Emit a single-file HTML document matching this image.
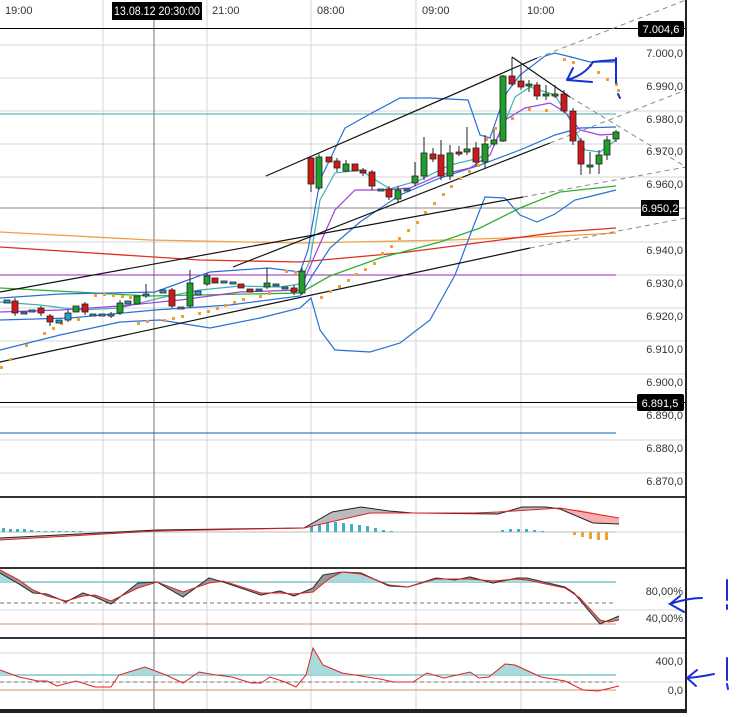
<!DOCTYPE html>
<html><head><meta charset="utf-8"><style>
html,body{margin:0;padding:0;background:#fff;}
svg{display:block;font-family:"Liberation Sans",sans-serif;}
.ax{font-size:11px;fill:#333;}
</style></head><body>
<svg width="740" height="717" viewBox="0 0 740 717" xmlns="http://www.w3.org/2000/svg">
<defs>
<clipPath id="c1" clipPathUnits="userSpaceOnUse"><rect x="0" y="569" width="620" height="13"/></clipPath>
<clipPath id="c2" clipPathUnits="userSpaceOnUse"><rect x="0" y="640" width="620" height="35"/></clipPath>
</defs>
<rect x="0" y="0" width="686" height="717" fill="#fff"/>
<g stroke="#d6d6d6" stroke-width="1">
<line x1="103" y1="0" x2="103" y2="710"/><line x1="207" y1="0" x2="207" y2="710"/>
<line x1="311" y1="0" x2="311" y2="710"/><line x1="416" y1="0" x2="416" y2="710"/>
<line x1="521" y1="0" x2="521" y2="710"/>
<line x1="0" y1="45" x2="686" y2="45"/><line x1="0" y1="78" x2="686" y2="78"/>
<line x1="0" y1="111" x2="686" y2="111"/><line x1="0" y1="144" x2="686" y2="144"/>
<line x1="0" y1="177" x2="686" y2="177"/><line x1="0" y1="242" x2="686" y2="242"/>
<line x1="0" y1="275" x2="686" y2="275"/><line x1="0" y1="308" x2="686" y2="308"/>
<line x1="0" y1="341" x2="686" y2="341"/><line x1="0" y1="374" x2="686" y2="374"/>
<line x1="0" y1="407" x2="686" y2="407"/><line x1="0" y1="440" x2="686" y2="440"/>
<line x1="0" y1="473" x2="686" y2="473"/>
<line x1="0" y1="532" x2="686" y2="532"/><line x1="0" y1="610" x2="686" y2="610"/>
<line x1="0" y1="653" x2="686" y2="653"/><line x1="0" y1="682" x2="686" y2="682"/>
</g>
<line x1="154" y1="20" x2="154" y2="712" stroke="#777" stroke-width="1"/>
<text x="5" y="14" class="ax">19:00</text>
<text x="212" y="14" class="ax">21:00</text>
<text x="317" y="14" class="ax">08:00</text>
<text x="422" y="14" class="ax">09:00</text>
<text x="527" y="14" class="ax">10:00</text>
<rect x="112" y="2" width="90" height="18" fill="#000"/>
<text x="114" y="15" font-size="11.5" fill="#fff" textLength="86" lengthAdjust="spacingAndGlyphs">13.08.12 20:30:00</text>
<line x1="0" y1="28.5" x2="686" y2="28.5" stroke="#000"/>
<line x1="0" y1="114" x2="616" y2="114" stroke="#3aa9a0"/>
<line x1="0" y1="208" x2="686" y2="208" stroke="#888"/>
<line x1="0" y1="275" x2="616" y2="275" stroke="#a020c0"/>
<line x1="0" y1="402.5" x2="686" y2="402.5" stroke="#000"/>
<line x1="0" y1="433" x2="616" y2="433" stroke="#1060b0"/>
<polyline fill="none" stroke="#f0a040" stroke-width="1.3" points="0,232 150,240 300,243 450,240 560,236 616,233"/>
<polyline fill="none" stroke="#e03020" stroke-width="1.3" points="0,247 200,260 300,262 400,253 500,240 560,232 616,228"/>
<polyline fill="none" stroke="#30b030" stroke-width="1.3" points="0,288 150,296 300,293 330,276 380,258 440,242 480,228 520,208 560,192 616,186"/>
<polyline fill="none" stroke="#2a6fd6" stroke-width="1.2" points="0,298 60,294 155,292 210,272 268,268 300,272 308,250 320,180 345,128 370,114 400,98 430,98 468,100 480,135 490,138 505,95 520,75 545,56 555,53 575,58 590,62 616,62"/>
<polyline fill="none" stroke="#2a6fd6" stroke-width="1.2" points="0,320 70,318 155,310 230,305 300,296 312,276 330,248 360,222 400,195 440,178 480,165 520,150 555,135 580,128 616,127"/>
<polyline fill="none" stroke="#2a6fd6" stroke-width="1.2" points="0,350 60,335 120,322 160,320 210,328 260,318 300,308 311,298 320,330 335,350 370,352 400,343 430,320 455,275 472,230 485,197 505,198 520,215 537,222 555,214 575,200 600,194 616,190"/>
<polyline fill="none" stroke="#40b0b0" stroke-width="1.2" points="0,302 40,305 80,310 120,308 160,298 200,290 240,286 280,287 300,284 310,260 320,200 335,173 360,170 390,189 420,180 450,165 480,158 500,135 515,97 530,87 555,95 570,120 585,150 600,152 616,140"/>
<polyline fill="none" stroke="#a040e0" stroke-width="1.2" points="0,312 60,310 120,306 180,300 240,292 300,290 315,255 335,210 355,190 380,190 410,188 440,175 470,168 490,155 505,120 525,108 550,103 565,112 580,130 600,135 616,134"/>
<g stroke="#111" stroke-width="1.2">
<line x1="266" y1="176" x2="537" y2="58"/>
<line x1="233" y1="267" x2="550" y2="143"/>
<line x1="0" y1="292" x2="523" y2="197"/>
<line x1="0" y1="362" x2="530" y2="248"/>
<line x1="512" y1="57" x2="570" y2="97"/>
</g>
<g stroke="#888" stroke-width="1" stroke-dasharray="5,4">
<line x1="537" y1="58" x2="686" y2="0"/>
<line x1="550" y1="143" x2="686" y2="90"/>
<line x1="523" y1="197" x2="686" y2="167"/>
<line x1="530" y1="248" x2="686" y2="218"/>
<line x1="570" y1="97" x2="686" y2="167"/>
</g>
<g fill="#f0a030">
<rect x="0" y="366" width="3" height="3"/><rect x="9" y="358" width="3" height="3"/><rect x="25" y="344" width="3" height="3"/><rect x="43" y="332" width="3" height="3"/><rect x="52" y="327" width="3" height="3"/><rect x="60" y="322" width="3" height="3"/><rect x="77" y="318" width="3" height="3"/><rect x="94" y="294" width="3" height="3"/><rect x="103" y="293" width="3" height="3"/><rect x="112" y="294" width="3" height="3"/><rect x="121" y="295" width="3" height="3"/><rect x="129" y="296" width="3" height="3"/>
<rect x="137" y="322" width="3" height="3"/><rect x="146" y="320" width="3" height="3"/><rect x="163" y="319" width="3" height="3"/><rect x="172" y="317" width="3" height="3"/><rect x="181" y="315" width="3" height="3"/><rect x="198" y="312" width="3" height="3"/><rect x="207" y="310" width="3" height="3"/><rect x="216" y="307" width="3" height="3"/><rect x="224" y="304" width="3" height="3"/><rect x="233" y="301" width="3" height="3"/><rect x="242" y="298" width="3" height="3"/><rect x="259" y="295" width="3" height="3"/><rect x="268" y="292" width="3" height="3"/><rect x="285" y="270" width="3" height="3"/><rect x="294" y="271" width="3" height="3"/>
<rect x="320" y="296" width="3" height="3"/><rect x="329" y="290" width="3" height="3"/><rect x="338" y="285" width="3" height="3"/><rect x="347" y="279" width="3" height="3"/><rect x="355" y="273" width="3" height="3"/><rect x="364" y="268" width="3" height="3"/><rect x="373" y="262" width="3" height="3"/><rect x="381" y="252" width="3" height="3"/><rect x="390" y="245" width="3" height="3"/><rect x="398" y="237" width="3" height="3"/><rect x="407" y="229" width="3" height="3"/><rect x="416" y="221" width="3" height="3"/><rect x="424" y="211" width="3" height="3"/><rect x="433" y="202" width="3" height="3"/><rect x="442" y="193" width="3" height="3"/><rect x="450" y="185" width="3" height="3"/><rect x="459" y="177" width="3" height="3"/><rect x="468" y="170" width="3" height="3"/><rect x="477" y="164" width="3" height="3"/><rect x="485" y="138" width="3" height="3"/><rect x="494" y="127" width="3" height="3"/><rect x="511" y="117" width="3" height="3"/><rect x="528" y="108" width="3" height="3"/><rect x="545" y="109" width="3" height="3"/>
<rect x="563" y="58" width="3" height="3"/><rect x="572" y="61" width="3" height="3"/><rect x="589" y="64" width="3" height="3"/><rect x="597" y="71" width="3" height="3"/><rect x="606" y="78" width="3" height="3"/><rect x="615" y="83" width="3" height="3"/><rect x="617" y="89" width="3" height="3"/>
</g>
<g stroke="#222" stroke-width="1">
<path d="M15 298V316M41 306V316M50 314V326M68 310V322M85 302V315M111 312V318M120 300V315M146 284V298M172 288V308M190 270V308M207 273V286M267 268V289M294 285V295M302 268V295M311 156V192M319 154V190M337 158V172M346 160V172M363 168V176M372 170V190M389 186V200M398 186V202M415 162V186M424 137V180M433 148V162M441 140V180M450 145V180M459 146V156M467 127V155M476 142V166M485 135V168M494 130V146M503 75V142M512 57V86M521 66V90M529 80V92M537 82V100M546 85V100M555 85V98M564 90V113M573 108V145M581 138V175M590 152V174M599 150V174M607 136V160M616 130V142"/>
</g>
<g stroke="#222" stroke-width="0.8">
<rect x="4" y="300" width="6" height="3" fill="#2a9bd0"/>
<rect x="12" y="301" width="6" height="12" fill="#d01818"/>
<rect x="21" y="312" width="6" height="2" fill="#2a9bd0"/>
<rect x="29" y="310" width="6" height="2" fill="#2a9bd0"/>
<rect x="38" y="308" width="6" height="5" fill="#d01818"/>
<rect x="47" y="316" width="6" height="6" fill="#d01818"/>
<rect x="56" y="320" width="6" height="3" fill="#2a9bd0"/>
<rect x="65" y="313" width="6" height="7" fill="#2a9bd0"/>
<rect x="73" y="306" width="6" height="6" fill="#1e9e2a"/>
<rect x="82" y="304" width="6" height="8" fill="#d01818"/>
<rect x="90" y="314" width="6" height="2" fill="#2a9bd0"/>
<rect x="99" y="314" width="6" height="2" fill="#2a9bd0"/>
<rect x="108" y="314" width="6" height="2" fill="#2a9bd0"/>
<rect x="117" y="303" width="6" height="10" fill="#1e9e2a"/>
<rect x="125" y="301" width="6" height="3" fill="#2a9bd0"/>
<rect x="134" y="296" width="6" height="8" fill="#1e9e2a"/>
<rect x="143" y="294" width="6" height="2" fill="#2a9bd0"/>
<rect x="160" y="290" width="6" height="3" fill="#2a9bd0"/>
<rect x="169" y="290" width="6" height="16" fill="#d01818"/>
<rect x="178" y="307" width="6" height="2" fill="#2a9bd0"/>
<rect x="187" y="283" width="6" height="23" fill="#1e9e2a"/>
<rect x="195" y="291" width="6" height="4" fill="#2a9bd0"/>
<rect x="204" y="276" width="6" height="8" fill="#1e9e2a"/>
<rect x="212" y="278" width="6" height="5" fill="#d01818"/>
<rect x="221" y="281" width="6" height="2" fill="#2a9bd0"/>
<rect x="230" y="282" width="6" height="2" fill="#2a9bd0"/>
<rect x="238" y="284" width="6" height="4" fill="#d01818"/>
<rect x="247" y="289" width="6" height="3" fill="#d01818"/>
<rect x="256" y="289" width="6" height="2" fill="#2a9bd0"/>
<rect x="264" y="283" width="6" height="4" fill="#1e9e2a"/>
<rect x="273" y="284" width="6" height="2" fill="#2a9bd0"/>
<rect x="282" y="287" width="6" height="2" fill="#2a9bd0"/>
<rect x="291" y="288" width="6" height="4" fill="#d01818"/>
<rect x="299" y="271" width="6" height="22" fill="#1e9e2a"/>
<rect x="308" y="158" width="6" height="26" fill="#d01818"/>
<rect x="316" y="157" width="6" height="31" fill="#1e9e2a"/>
<rect x="326" y="157" width="6" height="5" fill="#d01818"/>
<rect x="334" y="161" width="6" height="7" fill="#d01818"/>
<rect x="343" y="164" width="6" height="7" fill="#1e9e2a"/>
<rect x="352" y="164" width="6" height="7" fill="#d01818"/>
<rect x="360" y="170" width="6" height="3" fill="#d01818"/>
<rect x="369" y="172" width="6" height="14" fill="#d01818"/>
<rect x="378" y="189" width="6" height="2" fill="#2a9bd0"/>
<rect x="386" y="189" width="6" height="8" fill="#d01818"/>
<rect x="395" y="190" width="6" height="9" fill="#1e9e2a"/>
<rect x="404" y="189" width="6" height="2" fill="#2a9bd0"/>
<rect x="412" y="176" width="6" height="7" fill="#1e9e2a"/>
<rect x="421" y="153" width="6" height="23" fill="#1e9e2a"/>
<rect x="430" y="154" width="6" height="5" fill="#d01818"/>
<rect x="438" y="155" width="6" height="21" fill="#d01818"/>
<rect x="447" y="153" width="6" height="23" fill="#1e9e2a"/>
<rect x="456" y="152" width="6" height="2" fill="#d01818"/>
<rect x="464" y="149" width="6" height="3" fill="#1e9e2a"/>
<rect x="473" y="148" width="6" height="14" fill="#d01818"/>
<rect x="482" y="144" width="6" height="18" fill="#1e9e2a"/>
<rect x="491" y="140" width="6" height="4" fill="#1e9e2a"/>
<rect x="500" y="76" width="6" height="65" fill="#1e9e2a"/>
<rect x="509" y="76" width="6" height="8" fill="#d01818"/>
<rect x="518" y="81" width="6" height="6" fill="#d01818"/>
<rect x="526" y="84" width="6" height="2" fill="#1e9e2a"/>
<rect x="534" y="85" width="6" height="11" fill="#d01818"/>
<rect x="543" y="94" width="6" height="2" fill="#1e9e2a"/>
<rect x="552" y="94" width="6" height="2" fill="#1e9e2a"/>
<rect x="561" y="94" width="6" height="17" fill="#d01818"/>
<rect x="570" y="111" width="6" height="30" fill="#d01818"/>
<rect x="578" y="141" width="6" height="23" fill="#d01818"/>
<rect x="587" y="165" width="6" height="2" fill="#1e9e2a"/>
<rect x="596" y="155" width="6" height="9" fill="#1e9e2a"/>
<rect x="604" y="140" width="6" height="15" fill="#1e9e2a"/>
<rect x="613" y="132" width="6" height="7" fill="#1e9e2a"/>
</g>
<g class="ax" text-anchor="end">
<text x="683" y="57">7.000,0</text><text x="683" y="90">6.990,0</text><text x="683" y="123">6.980,0</text>
<text x="683" y="155">6.970,0</text><text x="683" y="188">6.960,0</text><text x="683" y="254">6.940,0</text>
<text x="683" y="287">6.930,0</text><text x="683" y="320">6.920,0</text><text x="683" y="353">6.910,0</text>
<text x="683" y="386">6.900,0</text><text x="683" y="419">6.890,0</text><text x="683" y="452">6.880,0</text>
<text x="683" y="485">6.870,0</text>
</g>
<rect x="638" y="21" width="46" height="16" rx="2" fill="#000"/>
<text x="661" y="33" font-size="11" fill="#fff" text-anchor="middle">7.004,6</text>
<rect x="641" y="200" width="38" height="16" fill="#000"/>
<text x="660" y="212" font-size="11" fill="#fff" text-anchor="middle">6.950,2</text>
<rect x="637" y="394" width="47" height="17" rx="2" fill="#000"/>
<text x="660" y="407" font-size="11" fill="#fff" text-anchor="middle">6.891,5</text>
<rect x="0" y="496" width="686" height="2" fill="#333"/>
<rect x="0" y="567" width="686" height="2" fill="#333"/>
<rect x="0" y="637" width="686" height="2" fill="#333"/>
<rect x="0" y="709" width="686" height="4" fill="#222"/>
<line x1="0" y1="532" x2="616" y2="532" stroke="#bbb"/>
<line x1="0" y1="582" x2="616" y2="582" stroke="#40a8a8"/>
<line x1="0" y1="603" x2="616" y2="603" stroke="#777" stroke-dasharray="4,3"/>
<line x1="0" y1="624" x2="616" y2="624" stroke="#d09070"/>
<line x1="0" y1="675" x2="616" y2="675" stroke="#40a8a8"/>
<line x1="0" y1="682" x2="616" y2="682" stroke="#777" stroke-dasharray="4,3"/>
<line x1="0" y1="690" x2="616" y2="690" stroke="#d09070"/>
<g fill="#40b0c8">
<rect x="2" y="528" width="3" height="4"/><rect x="9" y="529" width="3" height="3"/><rect x="16" y="529" width="3" height="3"/><rect x="23" y="529" width="3" height="3"/><rect x="30" y="530" width="3" height="2"/><rect x="37" y="531" width="3" height="1"/><rect x="44" y="531" width="3" height="1"/><rect x="51" y="531" width="3" height="1"/><rect x="58" y="531" width="3" height="1"/><rect x="65" y="531" width="3" height="1"/><rect x="72" y="531" width="3" height="1"/><rect x="79" y="531" width="3" height="1"/>
<rect x="310" y="526" width="3" height="6"/><rect x="318" y="525" width="3" height="7"/><rect x="326" y="523" width="3" height="9"/><rect x="334" y="522" width="3" height="10"/><rect x="342" y="523" width="3" height="9"/><rect x="350" y="524" width="3" height="8"/><rect x="358" y="525" width="3" height="7"/><rect x="366" y="526" width="3" height="6"/><rect x="374" y="528" width="3" height="4"/><rect x="382" y="530" width="3" height="2"/><rect x="390" y="531" width="3" height="1"/>
<rect x="501" y="530" width="3" height="2"/><rect x="509" y="529" width="3" height="3"/><rect x="517" y="529" width="3" height="3"/><rect x="525" y="529" width="3" height="3"/><rect x="533" y="530" width="3" height="2"/><rect x="541" y="531" width="3" height="1"/>
</g>
<g fill="#f0a030"><rect x="573" y="532" width="3" height="3"/><rect x="581" y="532" width="3" height="5"/><rect x="589" y="532" width="3" height="7"/><rect x="597" y="532" width="3" height="8"/><rect x="605" y="532" width="3" height="8"/></g>
<polygon fill="#bbb" points="0,538 157,530 304,528 332,512 361,507 389,511 413,513 498,514 522,507 546,507 560,509 593,523 619,524 619,518 560,508 498,512 474,513 408,513 370,513 304,528 157,531 0,540"/>
<polygon fill="#f4b0b0" points="560,509 593,523 619,524 619,518 580,510"/>
<polyline fill="none" stroke="#222" stroke-width="1" points="0,538 157,530 304,528 332,512 361,507 389,511 413,513 498,514 522,507 546,507 560,509 593,523 619,524"/>
<polyline fill="none" stroke="#e02020" stroke-width="1" points="0,540 157,531 304,528 370,513 408,513 474,513 498,512 560,508 619,518"/>
<path clip-path="url(#c1)" fill="#a8dadc" d="M0,582 L0,573 19,584 33,593 47,594 66,602 83,593 95,597 111,604 138,583 157,582 183,597 209,578 223,582 261,595 280,591 294,596 313,588 323,575 342,572 361,573 389,586 408,587 436,578 455,580 470,577 493,583 517,578 527,578 565,587 574,593 600,624 619,616 619,582Z"/>
<polygon fill="#999" points="0,573 19,584 33,593 47,594 66,602 83,593 95,597 111,604 138,583 157,582 183,597 209,578 223,582 261,595 280,591 294,596 313,588 323,575 342,572 361,573 389,586 408,587 436,578 455,580 470,577 493,583 517,578 527,578 565,587 574,593 600,624 619,616 619,620 609,622 600,620 580,598 565,588 527,580 517,579 493,581 470,579 436,579 408,587 389,585 361,574 342,572 330,578 313,592 294,594 280,593 261,593 223,581 209,583 183,592 157,582 138,588 111,601 95,595 83,596 66,601 47,596 33,590 19,580 0,570"/>
<polyline fill="none" stroke="#333" stroke-width="1.1" points="0,573 19,584 33,593 47,594 66,602 83,593 95,597 111,604 138,583 157,582 183,597 209,578 223,582 261,595 280,591 294,596 313,588 323,575 342,572 361,573 389,586 408,587 436,578 455,580 470,577 493,583 517,578 527,578 565,587 574,593 600,624 619,616"/>
<polyline fill="none" stroke="#e02020" stroke-width="1" points="0,570 19,580 33,590 47,596 66,601 83,596 95,595 111,601 138,588 157,582 183,592 209,583 223,581 261,593 280,593 294,594 313,592 330,578 342,572 361,574 389,585 408,587 436,579 470,579 493,581 517,579 527,580 565,588 580,598 600,620 609,622 619,620"/>
<path clip-path="url(#c2)" fill="#a8dadc" d="M0,675 L0,670 19,677 38,681 47,681 57,686 76,681 95,687 111,687 119,675 145,667 166,675 183,683 199,672 216,675 232,677 251,683 261,683 270,677 285,682 296,687 306,675 313,648 323,665 342,673 380,679 394,682 413,682 427,673 444,678 470,672 479,678 489,677 505,664 515,665 541,677 565,681 583,690 598,691 619,686 619,675Z"/>
<polyline fill="none" stroke="#e02020" stroke-width="1" points="0,670 19,677 38,681 47,681 57,686 76,681 95,687 111,687 119,675 145,667 166,675 183,683 199,672 216,675 232,677 251,683 261,683 270,677 285,682 296,687 306,675 313,648 323,665 342,673 380,679 394,682 413,682 427,673 444,678 470,672 479,678 489,677 505,664 515,665 541,677 565,681 583,690 598,691 619,686"/>
<g class="ax" text-anchor="end">
<text x="683" y="595">80,00%</text><text x="683" y="622">40,00%</text>
<text x="683" y="665">400,0</text><text x="683" y="694">0,0</text>
</g>
<rect x="685" y="0" width="2" height="713" fill="#222"/>
<g fill="none" stroke="#1530d8" stroke-width="2" stroke-linecap="round">
<path d="M593,62 Q585,75 567,80 M567,80 L573,68 M567,80 L592,82"/>
<path d="M593,62 L602,61 L616,60"/>
<path d="M616,58 L616,83"/>
<path d="M618,94 L620,98"/>
<path d="M702,598 Q688,598 670,604 L684,612 M670,604 L680,596"/>
<path d="M727,580 L727,600 M727,605 L727,609"/>
<path d="M714,674 Q700,677 687,678 L696,686 M687,678 L697,670"/>
<path d="M727,658 L727,680 M727,684 L728,689"/>
</g>
</svg>
</body></html>
